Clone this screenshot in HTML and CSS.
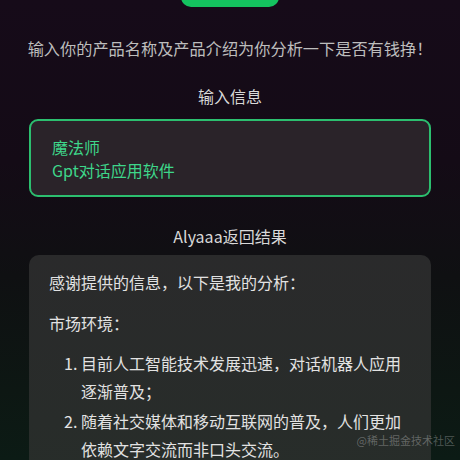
FILE: index.html
```html
<!DOCTYPE html>
<html lang="zh">
<head>
<meta charset="utf-8">
<link rel="stylesheet" href="styles.css">
</head>
<body>
<div class="page">
  <div class="top-btn"></div>
  <p class="subtitle">输入你的产品名称及产品介绍为你分析一下是否有钱挣！</p>
  <h2 class="label">输入信息</h2>
  <div class="input-box">
    <div>魔法师</div>
    <div>Gpt对话应用软件</div>
  </div>
  <h2 class="label result-label">Alyaaa返回结果</h2>
  <div class="result">
    <p class="para">感谢提供的信息，以下是我的分析：</p>
    <p class="para">市场环境：</p>
    <ol class="list">
      <li>目前人工智能技术发展迅速，对话机器人应用逐渐普及；</li>
      <li>随着社交媒体和移动互联网的普及，人们更加依赖文字交流而非口头交流。</li>
    </ol>
  </div>
</div>
<div class="watermark">@稀土掘金技术社区</div>
</body>
</html>
```
FILE: styles.css
```css
html, body {
  margin: 0;
  padding: 0;
  height: 460px;
  overflow: hidden;
}
body {
  font-family: "Noto Sans CJK SC", "Noto Sans", sans-serif;
  background: linear-gradient(180deg, #160b19 0%, #140b16 35%, #0f1012 60%, #0d1713 85%, #0c1b15 100%);
  color: #e0e0e0;
  position: relative;
}
.page {
  display: flex;
  flex-direction: column;
  align-items: center;
  padding: 0 29px;
}
.top-btn {
  width: 98px;
  height: 44px;
  margin-top: -37px;
  background: #14c35f;
  border-radius: 10px;
}
.subtitle {
  margin: 29px 0 0;
  font-size: 16.2px;
  line-height: 24px;
  color: #bdbdbd;
  white-space: nowrap;
}
.label {
  margin: 24px 0 0;
  font-size: 16px;
  font-weight: 400;
  line-height: 24px;
  color: #d8d8d8;
}
.input-box {
  align-self: stretch;
  margin-top: 11px;
  border: 2px solid #2cbf6f;
  border-radius: 9px;
  background: #2a2329;
  padding: 15px 21px 13px;
  font-size: 16px;
  line-height: 23px;
  color: #3ed68a;
}
.result-label {
  margin-top: 27px;
}
.result {
  align-self: stretch;
  margin-top: 7px;
  border-radius: 10px;
  background: linear-gradient(180deg, #2a2a2b 0%, #282c2a 50%, #263029 100%);
  padding: 13px 20px 20px;
  font-size: 16px;
  line-height: 28px;
  color: #e2e2e2;
  height: 300px;
}
.para {
  margin: 0 0 13px;
}
.list {
  margin: -1px 0 0;
  padding-left: 32px;
}
.list li {
  margin-bottom: 2px;
}
.watermark {
  position: absolute;
  right: 5px;
  bottom: 13px;
  font-size: 11px;
  line-height: 14px;
  color: rgba(255, 255, 255, 0.28);
}
```
